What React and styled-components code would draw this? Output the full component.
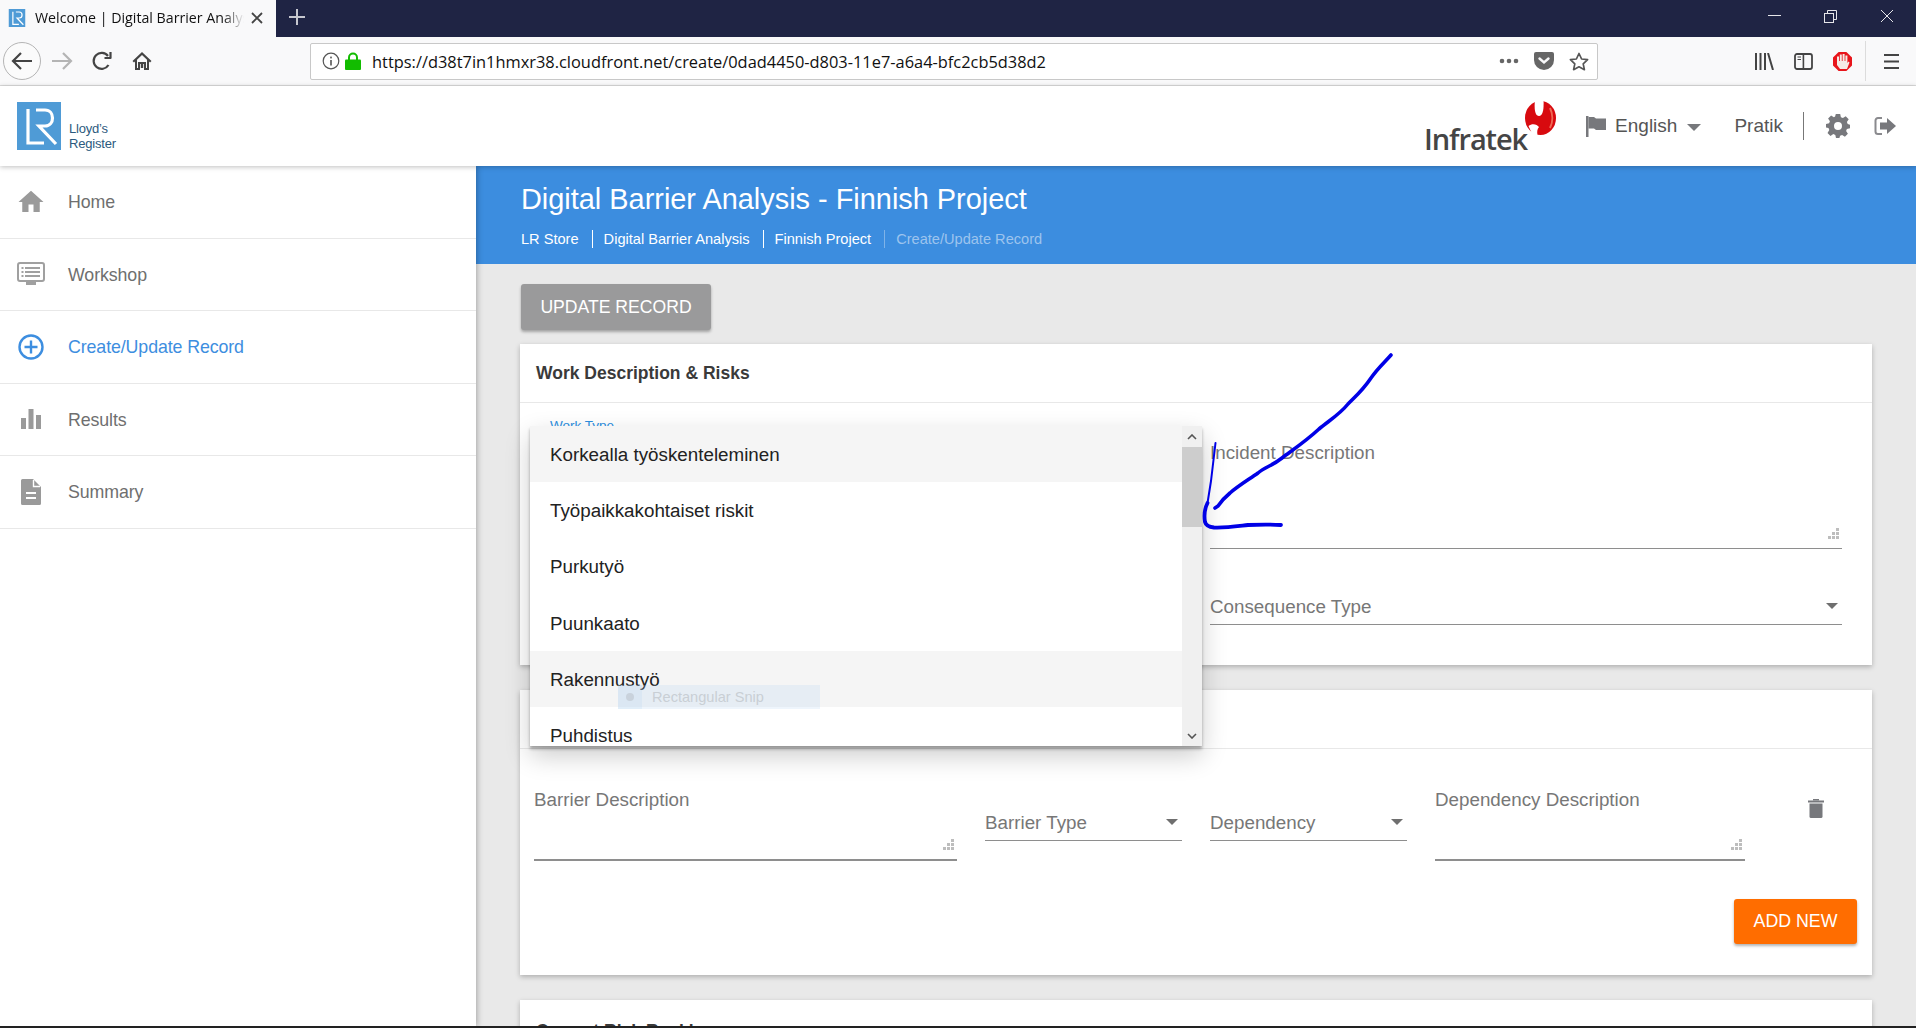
import React from 'react';
import styled, { createGlobalStyle } from 'styled-components';

const GlobalStyle = createGlobalStyle`
  html, body {
    margin: 0;
    padding: 0;
    overflow: hidden;
    background: #fff;
    font-family: "Liberation Sans", Arial, sans-serif;
  }
`;

const Page = styled.div`
  position: relative;
  width: 1916px;
  height: 1028px;
  overflow: hidden;
  display: flex;
  flex-direction: column;
`;

/* browser chrome */
const TitleBar = styled.div`
  height: 37px;
  flex: none;
  background: #1f2444;
  display: flex;
  align-items: stretch;
`;

const Tab = styled.div`
  width: 276px;
  background: #f9f9fa;
  display: flex;
  align-items: center;
  padding: 0 0 2px 8px;
  box-sizing: border-box;
`;

const TabTitle = styled.span`
  width: 209px;
  margin-left: 9px;
  font: 14.2px "Open Sans", sans-serif;
  color: #111;
  white-space: nowrap;
  overflow: hidden;
  mask-image: linear-gradient(to right, #000 90%, transparent);
`;

const TabClose = styled.svg`
  margin-left: 6px;
`;

const NewTab = styled.div`
  margin-left: 12px;
  padding-bottom: 4px;
  display: flex;
  align-items: center;
`;

const WindowControls = styled.div`
  margin-left: auto;
  display: flex;
  align-items: center;
  gap: 43px;
  padding: 0 22px 5px 0;
`;

const Toolbar = styled.div`
  height: 49px;
  flex: none;
  box-sizing: border-box;
  background: #f9f9fa;
  border-bottom: 1px solid #dcdcdc;
  display: flex;
  align-items: center;
  padding-left: 3px;
`;

const BackButton = styled.div`
  width: 38px;
  height: 38px;
  border: 1px solid #b5b5b5;
  border-radius: 50%;
  background: #fbfbfb;
  box-sizing: border-box;
  display: flex;
  align-items: center;
  justify-content: center;
`;

const NavButton = styled.div`
  width: 24px;
  display: flex;
  justify-content: center;
  margin-left: ${(p) => p.$left}px;
`;

const UrlBar = styled.div`
  margin-left: 156px;
  width: 1288px;
  height: 37px;
  background: #fff;
  border: 1px solid #c8c8c8;
  border-radius: 2px;
  box-sizing: border-box;
  display: flex;
  align-items: center;
  padding-left: 11px;
`;

const UrlText = styled.span`
  margin: 1px 0 0 11px;
  font: 16.4px "Open Sans", sans-serif;
  color: #111;
  white-space: nowrap;
`;

const UrlActions = styled.div`
  margin-left: auto;
  display: flex;
  align-items: center;
  gap: 15px;
  padding-right: 8px;
`;

const ToolIcons = styled.div`
  margin-left: 157px;
  display: flex;
  align-items: center;
  gap: 20px;
`;

const ToolDivider = styled.div`
  width: 1px;
  height: 40px;
  background: #dcdcdc;
  margin-left: 13px;
`;

const MenuButton = styled.div`
  margin-left: 18px;
  display: flex;
`;

/* app header */
const AppHeader = styled.header`
  height: 80px;
  flex: none;
  position: relative;
  z-index: 3;
  background: #fff;
  box-shadow: 0 1px 5px rgba(0, 0, 0, 0.25);
  display: flex;
  align-items: center;
  padding-left: 17px;
`;

const LloydsText = styled.div`
  margin: 20px 0 0 8px;
  font-size: 13px;
  line-height: 15px;
  letter-spacing: -0.2px;
  color: #2c5a7e;
`;

const HeaderRight = styled.div`
  margin-left: auto;
  display: flex;
  align-items: center;
`;

const InfratekLogo = styled.div`
  display: flex;
  align-items: flex-start;
  margin-right: 30px;
  height: 51px;
`;

const InfratekName = styled.span`
  margin-top: 20px;
  font: 600 29px/36px "Open Sans", sans-serif;
  letter-spacing: -1.1px;
  color: #454545;
`;

const InfratekBall = styled.svg`
  margin-left: -2px;
`;

const HeaderText = styled.span`
  font-size: 19px;
  color: #555;
  margin-left: ${(p) => p.$left || 0}px;
`;

const HeaderDivider = styled.div`
  width: 1px;
  height: 28px;
  background: #777;
  margin: 0 22px 0 20px;
`;

const HeaderCaret = styled.div`
  width: 0;
  height: 0;
  border-left: 7px solid transparent;
  border-right: 7px solid transparent;
  border-top: 7px solid #77787c;
  margin: 2px 0 0 10px;
`;

const LogoutButton = styled.div`
  display: flex;
  margin: 0 20px 0 24px;
`;

/* body */
const Body = styled.div`
  flex: 1;
  min-height: 0;
  display: flex;
`;

const Sidebar = styled.nav`
  width: 476px;
  flex: none;
  position: relative;
  z-index: 2;
  background: #fff;
  box-shadow: 1px 0 6px rgba(0, 0, 0, 0.3);
`;

const SideRow = styled.div`
  height: 72.5px;
  box-sizing: border-box;
  border-bottom: 1px solid #e8e8e8;
  display: flex;
  align-items: center;
  padding-left: 16px;
  font-size: 17.8px;
  letter-spacing: -0.1px;
  color: ${(p) => (p.$active ? '#3d8ee0' : '#6f6f6f')};
`;

const SideIcon = styled.div`
  width: 30px;
  display: flex;
  justify-content: center;
  margin-right: 22px;
`;

const SideLabel = styled.span`
  margin-top: 2px;
`;

const Main = styled.main`
  flex: 1;
  min-width: 0;
  overflow: hidden;
  background: #e9e9e9;
`;

const Banner = styled.div`
  height: 98px;
  box-sizing: border-box;
  background: #3c8ddf;
  color: #fff;
  padding: 16px 0 0 45px;
`;

const BannerTitle = styled.h1`
  margin: 0;
  font-size: 28.9px;
  font-weight: 400;
  line-height: 35px;
`;

const Crumbs = styled.div`
  margin-top: 13px;
  display: flex;
  font-size: 14.6px;
  line-height: 18px;
`;

const Crumb = styled.span`
  padding-right: 13px;
  margin-right: 11px;
  border-right: ${(p) => (p.$last ? 'none' : `1px solid ${p.$dim ? '#7fb3e8' : '#fff'}`)};
  color: ${(p) => (p.$last ? '#9cc4ee' : '#fff')};
`;

const Content = styled.div`
  padding: 20px 44px 0;
`;

const UpdateButton = styled.button`
  display: block;
  width: 190px;
  height: 46px;
  margin-left: 1px;
  border: none;
  border-radius: 3px;
  background: #9a9a9b;
  color: #fff;
  font: 17.6px "Liberation Sans", sans-serif;
  box-shadow: 0 2px 3px rgba(0, 0, 0, 0.3);
`;

const Card = styled.section`
  margin-top: ${(p) => p.$top}px;
  background: #fff;
  box-shadow: 0 2px 5px rgba(0, 0, 0, 0.25);
`;

const CardHeader = styled.div`
  height: 59px;
  box-sizing: border-box;
  border-bottom: 1px solid #e8e8e8;
  display: flex;
  align-items: center;
  padding: ${(p) => p.$drop || 0}px 0 0 16px;
  font-size: 17.5px;
  font-weight: 700;
  color: #3a3a3a;
`;

const WorkGrid = styled.div`
  display: grid;
  grid-template-columns: 1fr 632px;
  column-gap: 28px;
  padding: 0 30px 40px;
`;

const WorkTypeLabel = styled.div`
  margin-top: 15px;
  font-size: 13.5px;
  color: #2e8fdf;
`;

const RightColumn = styled.div`
  display: flex;
  flex-direction: column;
  padding-top: 39px;
`;

const TextField = styled.div`
  position: relative;
  width: ${(p) => p.$width || 'auto'};
  height: ${(p) => p.$height}px;
  box-sizing: border-box;
  border-bottom: ${(p) => p.$line}px solid #8e8e8e;
  font-size: 18.8px;
  line-height: 22px;
  color: #777;
`;

const Grip = styled.svg`
  position: absolute;
  right: 2px;
  bottom: 8px;
`;

const SelectField = styled.div`
  width: ${(p) => p.$width || 'auto'};
  height: 29px;
  margin-top: ${(p) => p.$top}px;
  box-sizing: border-box;
  border-bottom: 1px solid #8e8e8e;
  display: flex;
  justify-content: space-between;
  font-size: 18.8px;
  line-height: 22px;
  color: #777;
`;

const Caret = styled.span`
  width: 0;
  height: 0;
  margin: 7px 4px 0 0;
  border-left: 6.5px solid transparent;
  border-right: 6.5px solid transparent;
  border-top: 6.5px solid #6f6f6f;
`;

const BarrierRow = styled.div`
  display: flex;
  align-items: flex-start;
  gap: 28px;
  padding: 40px 0 0 14px;
`;

const TrashIcon = styled.div`
  margin: 10px 0 0 35px;
  display: flex;
`;

const CardFooter = styled.div`
  display: flex;
  justify-content: flex-end;
  padding: 38px 15px 31px 0;
`;

const AddButton = styled.button`
  width: 123px;
  height: 45px;
  border: none;
  border-radius: 3px;
  background: #ff6d00;
  color: #fff;
  font: 17.8px "Liberation Sans", sans-serif;
  box-shadow: 0 2px 3px rgba(0, 0, 0, 0.3);
`;

const BottomStrip = styled.div`
  height: 2px;
  flex: none;
  position: relative;
  z-index: 3;
  background: #222;
`;

/* things lying over the page */
const Dropdown = styled.div`
  position: absolute;
  left: 530px;
  top: 426px;
  width: 672px;
  height: 320px;
  z-index: 4;
  display: flex;
  overflow: hidden;
  background: #fff;
  box-shadow: 0 3px 3px rgba(0, 0, 0, 0.3), 0 10px 24px rgba(0, 0, 0, 0.2);
`;

const OptionList = styled.div`
  flex: 1;
  min-width: 0;
`;

const Option = styled.div`
  height: 56.2px;
  box-sizing: border-box;
  display: flex;
  align-items: center;
  padding: 2px 0 0 20px;
  font-size: 18.8px;
  color: #222;
  background: ${(p) => (p.$hover ? '#f5f5f5' : '#fff')};
`;

const Scrollbar = styled.div`
  width: 20px;
  flex: none;
  background: #f0f0f0;
  display: flex;
  flex-direction: column;
  align-items: center;
`;

const ScrollArrow = styled.div`
  height: 21px;
  display: flex;
  align-items: center;
  margin-top: ${(p) => (p.$down ? 'auto' : '0')};
`;

const ScrollThumb = styled.div`
  width: 100%;
  height: 80px;
  background: #cdcdcd;
`;

const SnipBadge = styled.div`
  position: absolute;
  left: 618px;
  top: 685px;
  width: 202px;
  height: 24px;
  z-index: 5;
  display: flex;
  align-items: center;
  background: rgba(176, 208, 240, 0.22);
  font-size: 14.6px;
  color: #c9cfd5;
`;

const SnipIcon = styled.div`
  width: 24px;
  height: 24px;
  margin-right: 10px;
  background: rgba(176, 208, 240, 0.2);
  display: flex;
  align-items: center;
  justify-content: center;

  &::after {
    content: '';
    width: 8px;
    height: 8px;
    border-radius: 50%;
    background: #c9d2dc;
  }
`;

const PenMark = styled.svg`
  position: absolute;
  left: 1200px;
  top: 350px;
  z-index: 6;
  pointer-events: none;
`;

/* drawings */
const LrLogo = ({ size = 48, width = 44 }) => (
  <svg width={width} height={size} viewBox="0 0 44 48">
    <rect width="44" height="48" fill="#4f9bd6" />
    <path d="M11 7V41H27" fill="none" stroke="#fff" strokeWidth="3.2" />
    <path d="M19 8H28C38 8 38 24 28 24H22L39 42" fill="none" stroke="#fff" strokeWidth="3.2" />
  </svg>
);

const InfratekMark = () => (
  <InfratekBall width="31" height="34" viewBox="0 0 31 34">
    <ellipse cx="15.5" cy="17" rx="15.5" ry="17" fill="#d80a0f" />
    <path d="M10 -1C9 8 10 15 14 15C18 15 19 8 18.500 -1Z" fill="#fff" />
    <path d="M3.500 25C7 22 12 23 14 26C12 28 12 31 12.500 34H8C6 31 5 28 3.500 25Z" fill="#fff" />
    <path d="M25 7C28 13 28 21 25 27" fill="none" stroke="#ee6a55" strokeWidth="2" />
  </InfratekBall>
);

const BackIcon = () => (
  <svg width="22" height="18" viewBox="0 0 22 18" fill="none" stroke="#444" strokeWidth="2.2">
    <path d="M21 9H2M10 1L2 9L10 17" />
  </svg>
);

const ForwardIcon = () => (
  <svg width="22" height="18" viewBox="0 0 22 18" fill="none" stroke="#b4b4b4" strokeWidth="2.2">
    <path d="M1 9H20M12 1L20 9L12 17" />
  </svg>
);

const ReloadIcon = () => (
  <svg width="20" height="20" viewBox="0 0 20 20" fill="none" stroke="#444" strokeWidth="2.2">
    <path d="M16.500 14A8 8 0 1 1 16 5" />
    <path d="M18.500 1V7H12.500" strokeLinejoin="round" />
  </svg>
);

const HomeIcon = () => (
  <svg width="20" height="20" viewBox="0 0 20 20">
    <path d="M10 1L0.500 10L2 11.500L3 10.600V19H8V13H12V19H17V10.600L18 11.500L19.500 10Z" fill="#444" />
    <path d="M10 4L15 8.800V17H14V11H6V17H5V8.800Z" fill="#f9f9fa" />
    <rect x="8.800" y="13" width="2.400" height="4" fill="#444" />
  </svg>
);

const InfoIcon = () => (
  <svg width="18" height="18" viewBox="0 0 18 18">
    <circle cx="9" cy="9" r="7.800" fill="none" stroke="#555" strokeWidth="1.200" />
    <rect x="8.200" y="8" width="1.600" height="5.500" fill="#555" />
    <rect x="8.200" y="4.600" width="1.600" height="1.800" fill="#555" />
  </svg>
);

const LockIcon = () => (
  <svg width="16" height="18" viewBox="0 0 16 18" style={{ marginLeft: 5 }}>
    <path d="M4 8V5.500A4 4 0 0 1 12 5.500V8" fill="none" stroke="#12bc00" strokeWidth="2" />
    <rect y="7.500" width="16" height="10.500" rx="1" fill="#12bc00" />
  </svg>
);

const MoreIcon = () => (
  <svg width="20" height="6" viewBox="0 0 20 6">
    <circle cx="3" cy="3" r="2.300" fill="#666" />
    <circle cx="10" cy="3" r="2.300" fill="#666" />
    <circle cx="17" cy="3" r="2.300" fill="#666" />
  </svg>
);

const PocketIcon = () => (
  <svg width="20" height="18" viewBox="0 0 20 18">
    <path d="M2 0H18A2 2 0 0 1 20 2V8A10 10 0 0 1 0 8V2A2 2 0 0 1 2 0Z" fill="#666" />
    <path d="M5.500 6.500L10 10.500L14.500 6.500" fill="none" stroke="#f9f9fa" strokeWidth="2.400" strokeLinecap="round" />
  </svg>
);

const StarIcon = () => (
  <svg width="20" height="19" viewBox="0 0 20 19">
    <path d="M10 1.500L12.600 7L18.600 7.700L14.200 11.800L15.400 17.700L10 14.800L4.600 17.700L5.800 11.800L1.400 7.700L7.400 7Z" fill="none" stroke="#555" strokeWidth="1.700" strokeLinejoin="round" />
  </svg>
);

const LibraryIcon = () => (
  <svg width="19" height="17" viewBox="0 0 19 17" fill="none" stroke="#444" strokeWidth="2">
    <path d="M1 0V17M5.500 0V17M10 0V17M13 0L18 17" />
  </svg>
);

const SidebarIcon = () => (
  <svg width="19" height="17" viewBox="0 0 19 17">
    <rect x="1" y="1" width="17" height="15" rx="2" fill="none" stroke="#444" strokeWidth="1.800" />
    <rect x="8.600" y="1" width="1.600" height="15" fill="#444" />
    <path d="M3.500 4H7M3.500 6.500H7" stroke="#444" strokeWidth="1.200" />
  </svg>
);

const StopIcon = () => (
  <svg width="19" height="19" viewBox="0 0 19 19">
    <path d="M5.600 0H13.400L19 5.600V13.400L13.400 19H5.600L0 13.400V5.600Z" fill="#e8151b" />
    <path d="M4 9.500V4.500H6V9H6.800V2.500H8.800V9H9.600V2H11.600V9H12.400V3.500H14.400V11L15.500 9.500L16.500 10.500L14 17H7L4 13Z" fill="#f5ebe6" />
  </svg>
);

const BurgerIcon = () => (
  <svg width="15" height="15" viewBox="0 0 15 15" fill="#444">
    <rect width="15" height="2" />
    <rect y="6.500" width="15" height="2" />
    <rect y="13" width="15" height="2" />
  </svg>
);

const FlagIcon = () => (
  <svg width="20" height="21" viewBox="0 0 20 21">
    <rect width="2.500" height="21" fill="#77787c" />
    <path d="M2.500 1H8L10 2.500H20V14H10L8 12.500H2.500Z" fill="#77787c" />
  </svg>
);

const GearIcon = () => (
  <svg width="24" height="24" viewBox="0 0 24 24">
    <path
      fillRule="evenodd"
      fill="#77787c"
      d="M9.800 0H14.200L14.900 3.300L16.900 4.100L19.700 2.300L22.700 5.300L20.900 8.100L21.700 10.100L24 10.800V14.200L20.900 14.900L20.100 16.900L21.900 19.700L18.900 22.700L16.100 20.900L14.100 21.700L13.400 24H10L9.300 20.900L7.300 20.100L4.500 21.900L1.500 18.900L3.300 16.100L2.500 14.100L0 13.400V10L3.100 9.300L3.900 7.300L2.100 4.500L5.100 1.500L7.900 3.300L9.100 2.500ZM12 8A4 4 0 1 0 12 16A4 4 0 1 0 12 8Z"
    />
  </svg>
);

const SignOutIcon = () => (
  <svg width="22" height="20" viewBox="0 0 22 20">
    <path d="M8 2H4A2.500 2.500 0 0 0 1.500 4.500V15.500A2.500 2.500 0 0 0 4 18H8" fill="none" stroke="#8a8a8e" strokeWidth="2" />
    <path d="M13 2L22 10L13 18V13.500H6V6.500H13Z" fill="#77787c" />
  </svg>
);

const NavHome = () => (
  <svg width="30" height="30" viewBox="0 0 24 24">
    <path d="M10 20v-6h4v6h5v-8h3L12 3 2 12h3v8z" fill="#9a9a9a" />
  </svg>
);

const NavWorkshop = () => (
  <svg width="28" height="24" viewBox="0 0 28 24">
    <rect x="1" y="1" width="26" height="18" rx="2" fill="none" stroke="#a0a0a0" strokeWidth="2" />
    <path d="M9 20H19V23H9Z" fill="#a0a0a0" />
    <path d="M8 6H23M8 10H23M8 14H23" stroke="#a0a0a0" strokeWidth="2" />
    <path d="M4.500 6H6.500M4.500 10H6.500M4.500 14H6.500" stroke="#a0a0a0" strokeWidth="2" />
  </svg>
);

const NavCreate = () => (
  <svg width="26" height="26" viewBox="0 0 26 26" fill="none" stroke="#3d8ee0" strokeWidth="2.400">
    <circle cx="13" cy="13" r="11.500" />
    <path d="M13 6.500V19.500M6.500 13H19.500" />
  </svg>
);

const NavResults = () => (
  <svg width="20" height="20" viewBox="0 0 20 20" fill="#9a9a9a">
    <rect y="9" width="5" height="11" />
    <rect x="7.500" width="5" height="20" />
    <rect x="15" y="6" width="5" height="14" />
  </svg>
);

const NavSummary = () => (
  <svg width="20" height="26" viewBox="0 0 20 26">
    <path d="M1.500 0H12L20 8V24.500A1.500 1.500 0 0 1 18.500 26H1.500A1.500 1.500 0 0 1 0 24.500V1.500A1.500 1.500 0 0 1 1.500 0Z" fill="#9a9a9a" />
    <path d="M12.500 1V7.500H19" fill="none" stroke="#fff" strokeWidth="1.400" />
    <path d="M5 14H15M5 19H15" stroke="#fff" strokeWidth="2.200" />
  </svg>
);

const GripDots = () => (
  <Grip width="12" height="12" viewBox="0 0 12 12" fill="#bdbdbd">
    <rect x="8" y="0" width="3" height="3" />
    <rect x="4" y="4" width="3" height="3" />
    <rect x="8" y="4" width="3" height="3" />
    <rect x="0" y="8" width="3" height="3" />
    <rect x="4" y="8" width="3" height="3" />
    <rect x="8" y="8" width="3" height="3" />
  </Grip>
);

const Trash = () => (
  <svg width="16" height="19" viewBox="0 0 16 19" fill="#77787c">
    <rect x="5" y="0" width="6" height="1.500" />
    <rect x="0" y="1.500" width="16" height="2" />
    <path d="M1.500 4.500H14.500V17.500A1.500 1.500 0 0 1 13 19H3A1.500 1.500 0 0 1 1.500 17.500Z" />
  </svg>
);

const ArrowGlyph = ({ down }) => (
  <svg width="10" height="6" viewBox="0 0 10 6" fill="none" stroke="#555" strokeWidth="1.600">
    <path d={down ? 'M1 1L5 5L9 1' : 'M1 5L5 1L9 5'} />
  </svg>
);

const navItems = [
  { label: 'Home', icon: <NavHome /> },
  { label: 'Workshop', icon: <NavWorkshop /> },
  { label: 'Create/Update Record', icon: <NavCreate />, active: true },
  { label: 'Results', icon: <NavResults /> },
  { label: 'Summary', icon: <NavSummary /> },
];

const workTypes = [
  'Korkealla työskenteleminen',
  'Työpaikkakohtaiset riskit',
  'Purkutyö',
  'Puunkaato',
  'Rakennustyö',
  'Puhdistus',
];

const App = () => (
  <>
    <GlobalStyle />
    <Page>
      <TitleBar>
        <Tab>
          <LrLogo size={18} width={18} />
          <TabTitle>Welcome | Digital Barrier Analysis</TabTitle>
          <TabClose width="14" height="14" viewBox="0 0 14 14" stroke="#444" strokeWidth="1.800">
            <path d="M2 2L12 12M12 2L2 12" />
          </TabClose>
        </Tab>
        <NewTab>
          <svg width="18" height="18" viewBox="0 0 18 18" stroke="#c6c7cf" strokeWidth="2">
            <path d="M9 1V17M1 9H17" />
          </svg>
        </NewTab>
        <WindowControls>
          <svg width="13" height="2" viewBox="0 0 13 2"><rect width="13" height="1" fill="#e6e6ea" /></svg>
          <svg width="13" height="13" viewBox="0 0 13 13" fill="none" stroke="#e6e6ea">
            <rect x="0.500" y="3.500" width="9" height="9" />
            <path d="M3.500 3V0.500H12.500V9.500H10" />
          </svg>
          <svg width="14" height="14" viewBox="0 0 14 14" stroke="#e6e6ea">
            <path d="M1 1L13 13M13 1L1 13" />
          </svg>
        </WindowControls>
      </TitleBar>

      <Toolbar>
        <BackButton><BackIcon /></BackButton>
        <NavButton $left={9}><ForwardIcon /></NavButton>
        <NavButton $left={16}><ReloadIcon /></NavButton>
        <NavButton $left={16}><HomeIcon /></NavButton>
        <UrlBar>
          <InfoIcon />
          <LockIcon />
          <UrlText>https://d38t7in1hmxr38.cloudfront.net/create/0dad4450-d803-11e7-a6a4-bfc2cb5d38d2</UrlText>
          <UrlActions>
            <MoreIcon />
            <PocketIcon />
            <StarIcon />
          </UrlActions>
        </UrlBar>
        <ToolIcons>
          <LibraryIcon />
          <SidebarIcon />
          <StopIcon />
        </ToolIcons>
        <ToolDivider />
        <MenuButton><BurgerIcon /></MenuButton>
      </Toolbar>

      <AppHeader>
        <LrLogo />
        <LloydsText>Lloyd’s<br />Register</LloydsText>
        <HeaderRight>
          <InfratekLogo>
            <InfratekName>Infratek</InfratekName>
            <InfratekMark />
          </InfratekLogo>
          <FlagIcon />
          <HeaderText $left={9}>English</HeaderText>
          <HeaderCaret />
          <HeaderText $left={33}>Pratik</HeaderText>
          <HeaderDivider />
          <GearIcon />
          <LogoutButton><SignOutIcon /></LogoutButton>
        </HeaderRight>
      </AppHeader>

      <Body>
        <Sidebar>
          {navItems.map((item) => (
            <SideRow key={item.label} $active={item.active}>
              <SideIcon>{item.icon}</SideIcon>
              <SideLabel>{item.label}</SideLabel>
            </SideRow>
          ))}
        </Sidebar>

        <Main>
          <Banner>
            <BannerTitle>Digital Barrier Analysis - Finnish Project</BannerTitle>
            <Crumbs>
              <Crumb>LR Store</Crumb>
              <Crumb>Digital Barrier Analysis</Crumb>
              <Crumb $dim>Finnish Project</Crumb>
              <Crumb $last>Create/Update Record</Crumb>
            </Crumbs>
          </Banner>

          <Content>
            <UpdateButton>UPDATE RECORD</UpdateButton>

            <Card $top={14}>
              <CardHeader>Work Description &amp; Risks</CardHeader>
              <WorkGrid>
                <WorkTypeLabel>Work Type</WorkTypeLabel>
                <RightColumn>
                  <TextField $height={107} $line={1}>
                    Incident Description
                    <GripDots />
                  </TextField>
                  <SelectField $top={47}>
                    Consequence Type
                    <Caret />
                  </SelectField>
                </RightColumn>
              </WorkGrid>
            </Card>

            <Card $top={25}>
              <CardHeader />
              <BarrierRow>
                <TextField $width="423px" $height={72} $line={2}>
                  Barrier Description
                  <GripDots />
                </TextField>
                <SelectField $width="197px" $top={23}>
                  Barrier Type
                  <Caret />
                </SelectField>
                <SelectField $width="197px" $top={23}>
                  Dependency
                  <Caret />
                </SelectField>
                <TextField $width="310px" $height={72} $line={2}>
                  Dependency Description
                  <GripDots />
                </TextField>
                <TrashIcon><Trash /></TrashIcon>
              </BarrierRow>
              <CardFooter>
                <AddButton>ADD NEW</AddButton>
              </CardFooter>
            </Card>

            <Card $top={25}>
              <CardHeader $drop={4}>Current Risk Ranking</CardHeader>
            </Card>
          </Content>
        </Main>
      </Body>
      <BottomStrip />

      <Dropdown>
        <OptionList>
          {workTypes.map((name, i) => (
            <Option key={name} $hover={i === 0 || i === 4}>{name}</Option>
          ))}
        </OptionList>
        <Scrollbar>
          <ScrollArrow><ArrowGlyph /></ScrollArrow>
          <ScrollThumb />
          <ScrollArrow $down><ArrowGlyph down /></ScrollArrow>
        </Scrollbar>
      </Dropdown>

      <SnipBadge>
        <SnipIcon />
        Rectangular Snip
      </SnipBadge>

      <PenMark width="200" height="185" viewBox="1200 350 200 185" fill="none" stroke="#0000e6" strokeLinecap="round" strokeLinejoin="round">
        <path strokeWidth="3.600" d="M1391 355C1384 363 1378 368 1371 378C1363 390 1356 396 1348 404C1340 414 1330 420 1319 429C1306 441 1294 449 1282 458C1272 466 1265 467 1258 473C1248 480 1238 486 1230 493C1224 498 1220 503 1218 506L1215 508" />
        <path strokeWidth="2" d="M1215.500 443L1211 481L1207.500 503" />
        <path strokeWidth="3.800" d="M1207.500 503C1204 510 1204 516 1205 522C1206 526 1209 527 1214 527.500C1225 528 1235 526.500 1248 525C1260 524.500 1272 524.500 1281 525" />
      </PenMark>
    </Page>
  </>
);

export default App;
